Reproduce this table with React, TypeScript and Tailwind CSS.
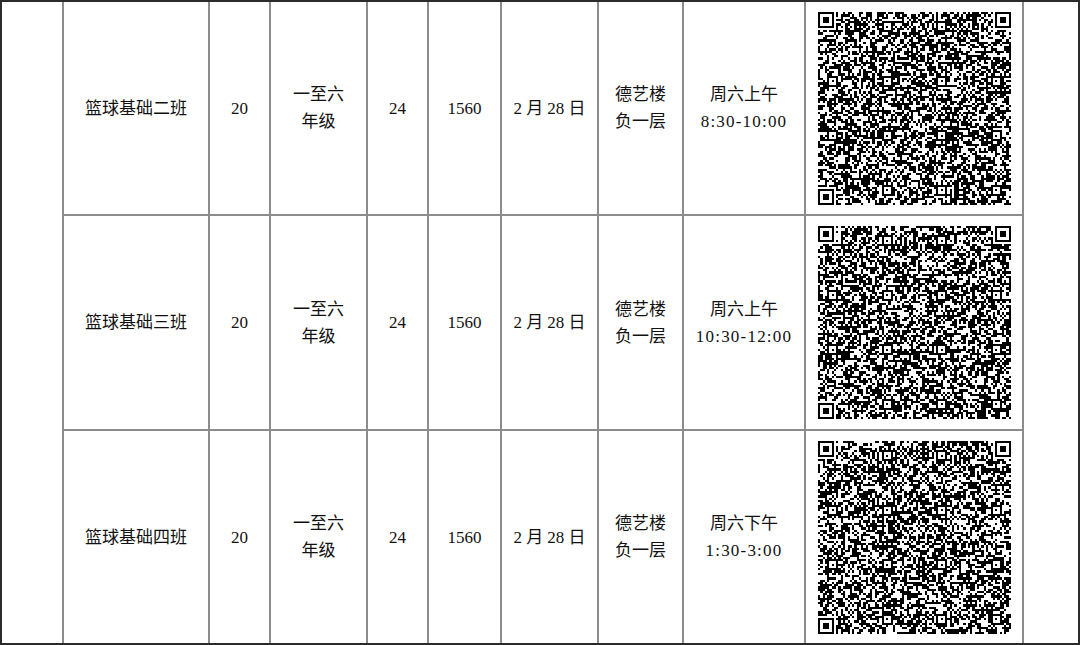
import React from "react";

const rows = [
  { name: "篮球基础二班", time: ["周六上午", "8:30-10:00"], seed: 11 },
  { name: "篮球基础三班", time: ["周六上午", "10:30-12:00"], seed: 47 },
  { name: "篮球基础四班", time: ["周六下午", "1:30-3:00"], seed: 93 },
];

const N = 85;

function qrPath(seed: number) {
  let s = seed * 2654435761;
  const rand = () => {
    s = (s * 1103515245 + 12345) & 0x7fffffff;
    return s / 0x7fffffff;
  };
  const grid: number[][] = Array.from({ length: N }, () => Array(N).fill(-1));
  const finder = (r0: number, c0: number) => {
    for (let r = -1; r <= 7; r++)
      for (let c = -1; c <= 7; c++) {
        const rr = r0 + r;
        const cc = c0 + c;
        if (rr < 0 || cc < 0 || rr >= N || cc >= N) continue;
        const ring = Math.max(Math.abs(r - 3), Math.abs(c - 3));
        grid[rr][cc] = ring === 4 || ring === 2 ? 0 : 1;
      }
  };
  finder(0, 0);
  finder(0, N - 7);
  finder(N - 7, 0);
  for (let i = 8; i < N - 8; i++) {
    grid[6][i] = i % 2 === 0 ? 1 : 0;
    grid[i][6] = i % 2 === 0 ? 1 : 0;
  }
  // alignment patterns
  const al = [6, 30, 54, 78];
  for (const ar of al)
    for (const ac of al) {
      if ((ar === 6 && ac === 6) || (ar === 6 && ac === 78) || (ar === 78 && ac === 6)) continue;
      for (let r = -2; r <= 2; r++)
        for (let c = -2; c <= 2; c++) {
          const ring = Math.max(Math.abs(r), Math.abs(c));
          grid[ar + r][ac + c] = ring === 1 ? 0 : 1;
        }
    }
  let d = "";
  for (let r = 0; r < N; r++)
    for (let c = 0; c < N; c++) {
      let v = grid[r][c];
      if (v === -1) v = rand() < 0.54 ? 1 : 0;
      if (v === 1) d += `M${c} ${r}h1v1h-1z`;
    }
  return d;
}

function QR({ seed }: { seed: number }) {
  const d = React.useMemo(() => qrPath(seed), [seed]);
  return (
    <svg width="193" height="193" viewBox={`0 0 ${N} ${N}`} shapeRendering="crispEdges">
      <path d={d} fill="#000" />
    </svg>
  );
}

const cell = "flex items-center justify-center text-center border-r-2 border-[#8c8c8c]";

export default function App() {
  return (
    <div
      className="w-[1080px] h-[645px] bg-white border-2 border-[#2b2b2b] text-[17px] leading-[27px] text-[#111]"
      style={{ fontFamily: '"Liberation Serif", "Noto Sans CJK SC", serif' }}
    >
      <div className="grid h-full grid-cols-[62px_146px_61px_97px_61px_73px_97px_85px_122px_218px_54px] grid-rows-[214px_215px_212px]">
        <div className={`${cell} row-span-3`} />
        {rows.map((r, i) => {
          const rb = i < 2 ? "border-b-2" : "";
          return (
            <React.Fragment key={r.name}>
              <div className={`${cell} ${rb}`}>{r.name}</div>
              <div className={`${cell} ${rb}`}>20</div>
              <div className={`${cell} ${rb} flex-col`}>
                <span>一至六</span>
                <span>年级</span>
              </div>
              <div className={`${cell} ${rb}`}>24</div>
              <div className={`${cell} ${rb}`}>1560</div>
              <div className={`${cell} ${rb}`}>2 月 28 日</div>
              <div className={`${cell} ${rb} flex-col`}>
                <span>德艺楼</span>
                <span>负一层</span>
              </div>
              <div className={`${cell} ${rb} flex-col`}>
                <span>{r.time[0]}</span>
                <span className="tracking-[1.2px]">{r.time[1]}</span>
              </div>
              <div className={`${cell} ${rb}`}>
                <QR seed={r.seed} />
              </div>
              {i === 0 && <div className="row-span-3" />}
            </React.Fragment>
          );
        })}
      </div>
    </div>
  );
}
